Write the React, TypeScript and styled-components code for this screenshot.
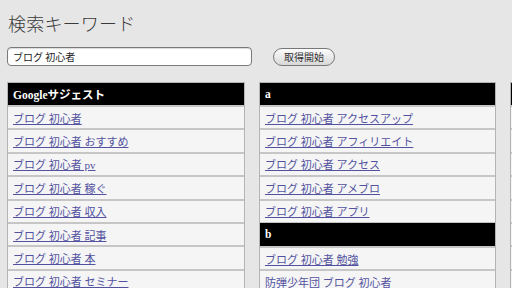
import React from "react";
import styled, { createGlobalStyle } from "styled-components";

const Global = createGlobalStyle`
  html, body { margin: 0; padding: 0; background: #e6e6e6; }
  body { width: 512px; height: 288px; overflow: hidden; }
`;

const Page = styled.div`
  padding: 11px 0 0 7px;
  font-family: "Noto Sans CJK JP", "Noto Sans", sans-serif;
  color: #333;
`;

const Title = styled.h1`
  margin: 0 0 0 1px;
  font-size: 18px;
  font-weight: 300;
  line-height: 24px;
  color: #3a3a3a;
  letter-spacing: 0.2px;
`;

const SearchBar = styled.div`
  display: flex;
  align-items: center;
  margin-top: 12px;
  gap: 21px;
`;

const Input = styled.input`
  box-sizing: border-box;
  width: 245px;
  height: 19px;
  border: 1px solid #7a7a7a;
  border-radius: 4px;
  background: #fff;
  padding: 0 5px;
  font-family: "Noto Sans CJK JP", sans-serif;
  font-size: 10px;
  color: #222;
  outline: none;
  box-shadow: inset 0 1px 1px rgba(0, 0, 0, 0.15);
`;

const Button = styled.button`
  box-sizing: border-box;
  width: 62px;
  height: 18px;
  border: 1px solid #777;
  border-radius: 9px;
  background: linear-gradient(#fdfdfd, #e8e8e8 55%, #d8d8d8);
  font-family: "Noto Sans CJK JP", sans-serif;
  font-size: 10px;
  line-height: 16px;
  color: #333;
  padding: 0;
`;

const Columns = styled.div`
  display: grid;
  grid-template-columns: 238px 237px 237px;
  column-gap: 14px;
  margin-top: 16px;
  align-items: start;
`;

const Column = styled.div`
  border: 1px solid #b4b4b4;
  background: #f4f4f4;
`;

const Header = styled.div<{ $first?: boolean }>`
  box-sizing: border-box;
  height: ${(p) => (p.$first ? "22px" : "24px")};
  background: #000;
  color: #fff;
  font-family: "Liberation Serif", "Noto Sans CJK JP", serif;
  font-weight: bold;
  font-size: 11.5px;
  display: flex;
  align-items: center;
  padding-left: 5px;
  border-top: ${(p) => (p.$first ? "none" : "1px solid #c4c4c4")};
`;

const Row = styled.div`
  box-sizing: border-box;
  height: 23.4px;
  border-top: 2px solid #c6c6c6;
  display: flex;
  align-items: center;
  padding-left: 5px;
  background: #f5f5f5;
`;

const Link = styled.a`
  font-family: "Liberation Serif", "Noto Sans CJK JP", serif;
  font-size: 11px;
  color: #52529f;
  text-decoration: underline;
  white-space: nowrap;
`;

type Group = { title: string; items: string[] };

const data: Group[][] = [
  [
    {
      title: "Googleサジェスト",
      items: [
        "ブログ 初心者",
        "ブログ 初心者 おすすめ",
        "ブログ 初心者 pv",
        "ブログ 初心者 稼ぐ",
        "ブログ 初心者 収入",
        "ブログ 初心者 記事",
        "ブログ 初心者 本",
        "ブログ 初心者 セミナー",
      ],
    },
  ],
  [
    {
      title: "a",
      items: [
        "ブログ 初心者 アクセスアップ",
        "ブログ 初心者 アフィリエイト",
        "ブログ 初心者 アクセス",
        "ブログ 初心者 アメブロ",
        "ブログ 初心者 アプリ",
      ],
    },
    {
      title: "b",
      items: ["ブログ 初心者 勉強", "防弾少年団 ブログ 初心者"],
    },
  ],
  [
    {
      title: "",
      items: ["", "", "", "", "", "", "", ""],
    },
  ],
];

export default function App() {
  return (
    <>
      <Global />
      <Page>
        <Title>検索キーワード</Title>
        <SearchBar>
          <Input defaultValue="ブログ 初心者" />
          <Button>取得開始</Button>
        </SearchBar>
        <Columns>
          {data.map((groups, ci) => (
            <Column key={ci}>
              {groups.map((g, gi) => (
                <React.Fragment key={gi}>
                  <Header $first={gi === 0}>{g.title}</Header>
                  {g.items.map((it, ii) => (
                    <Row key={ii}>{it && <Link href="#">{it}</Link>}</Row>
                  ))}
                </React.Fragment>
              ))}
            </Column>
          ))}
        </Columns>
      </Page>
    </>
  );
}
